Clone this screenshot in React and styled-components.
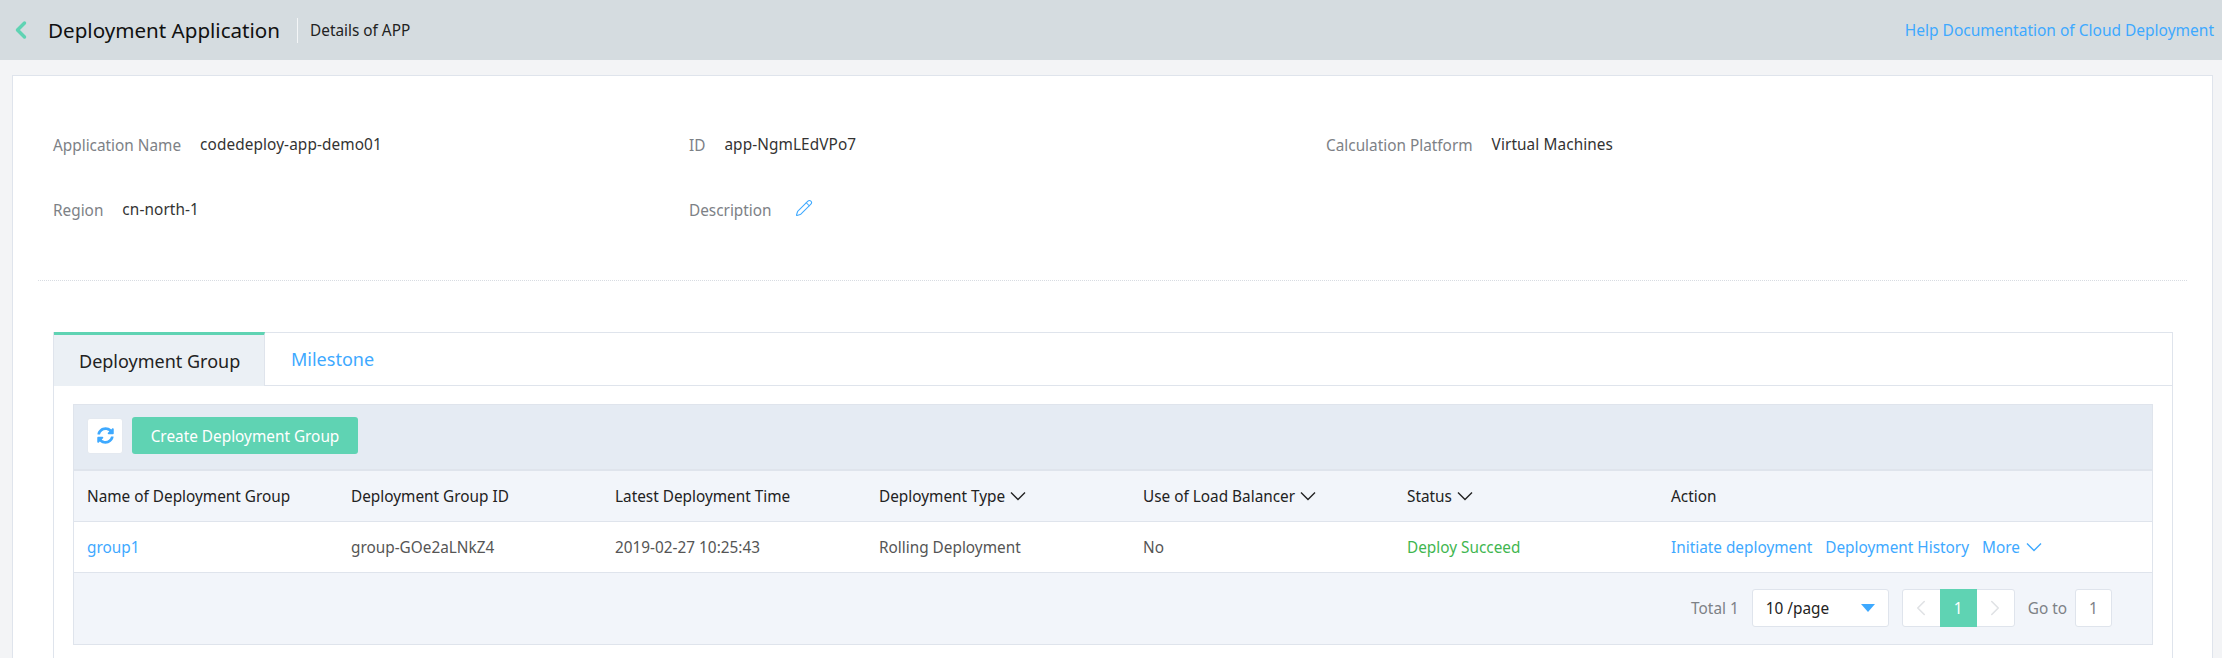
import React from "react";
import styled, { createGlobalStyle } from "styled-components";
import { FaSyncAlt } from "react-icons/fa";
import { ChevronLeft, ChevronRight, Pencil } from "lucide-react";

const Global = createGlobalStyle`
  html, body { margin: 0; padding: 0; background: #f3f4f6; }
  body { font-family: "Noto Sans", "Liberation Sans", sans-serif; font-size: 15.35px; color: #333; overflow: hidden; }
  * { box-sizing: border-box; }
`;
const link = "#3ea9ff";
const teal = "#5fd3b3";

const Page = styled.div`width: 2222px; height: 658px; overflow: hidden; display: flex; flex-direction: column;`;
const Header = styled.header`
  flex: none; height: 60px; background: #d5dce0; display: flex; align-items: center;
  padding: 0 8px 0 7px;
`;
const Back = styled.span`display: flex; width: 41px; color: ${teal};`;
const Title = styled.h1`margin: 0; font-weight: 400; font-size: 20.6px; color: #111;`;
const Crumb = styled.span`
  margin-left: 17px; padding-left: 12px; height: 25px; line-height: 24px; border-left: 1px solid #f4f6f7;
  font-size: 15.35px; color: #222;
`;
const HelpLink = styled.a`margin-left: auto; color: ${link}; font-size: 15.5px;`;
const Card = styled.main`
  flex: 1; margin: 15px 9px 0 12px; background: #fff; border: 1px solid #dfe4ec; border-bottom: 0;
  padding: 0 40px 0 25px;
`;
const Info = styled.section`
  display: grid; grid-template-columns: 636px 637px 1fr; grid-auto-rows: 65px;
  padding: 35px 0 0 15px; height: 205px; border-bottom: 1px dotted #d8dce2;
  margin-right: -15px;
`;
const Field = styled.div`display: flex; align-items: center; height: 65px;`;
const Label = styled.span`color: #7d8186; margin-right: 19px; position: relative; top: 1px;`;
const Value = styled.span`color: #333; letter-spacing: .1px;`;
const EditIcon = styled(Pencil)`color: ${link}; margin-left: 4px; position: relative; top: -1px;`;
const Tabs = styled.section`
  margin: 51px 0 0 15px; margin-right: -1px; height: 400px; border: 1px solid #dfe4ec; border-bottom: 0;
`;
const TabBar = styled.nav`display: flex; height: 53px; border-bottom: 1px solid #dfe4ec;`;
const Tab = styled.div`
  height: 52px; padding: 0 26px; display: flex; align-items: center; font-size: 18px; white-space: nowrap;
  ${p => p.$active
    ? `width:211px;padding:0 25px;background:#ebf0f5;color:#222;border-top:3px solid ${teal};border-right:1px solid #dfe4ec;margin-top:-1px;height:54px;`
    : `color:${link};`}
`;
const Panel = styled.div`margin: 18px 19px 0 19px; border: 1px solid #dfe4ec;`;
const Toolbar = styled.div`
  height: 66px; background: #e5ebf3; border-bottom: 2px solid #dfe4ec; display: flex; align-items: center;
  padding: 0 0 3px 13px; gap: 9px;
`;
const RefreshButton = styled.button`
  width: 36px; height: 36px; padding: 0; background: #fff; border: 1px solid #e4e9f0; border-radius: 3px;
  color: ${link}; display: flex; align-items: center; justify-content: center; font-size: 17px;
`;
const CreateButton = styled.button`
  width: 226px; height: 37px; padding: 0; background: ${teal}; border: 0; border-radius: 3px; color: #fff;
  font: inherit; font-size: 15.35px;
`;
const Row = styled.div`
  display: grid; grid-template-columns: repeat(6, 264px) 1fr; align-items: center;
  height: ${p => p.$h}px; padding-left: 13px; background: ${p => p.$bg}; border-bottom: 1px solid #dfe4ec;
  color: ${p => p.$color};
`;
const HeadCell = styled.span`display: flex; align-items: center; gap: 5px;`;
const Cell = styled.span`color: ${p => p.$color || "inherit"};`;
const Actions = styled.span`display: flex; align-items: center; gap: 13px; color: ${link};`;
const More = styled.span`display: flex; align-items: center; gap: 6px;`;
const Footer = styled.div`
  height: 71px; background: #f2f5fa; display: flex; align-items: center; justify-content: flex-end;
  padding: 0 40px 2px 0; color: #7d8186;
`;
const Select = styled.div`
  width: 137px; height: 38px; margin-left: 13px; background: #fff; border: 1px solid #dfe4ec; border-radius: 3px;
  display: flex; align-items: center; justify-content: space-between; padding: 0 13px; color: #222;
`;
const Caret = styled.i`
  width: 0; height: 0; border-left: 7.5px solid transparent; border-right: 7.5px solid transparent; border-top: 8px solid ${link};
`;
const Pager = styled.div`
  display: flex; height: 38px; margin: 0 13px; background: #fff; border: 1px solid #dfe4ec; border-radius: 3px;
`;
const PageCell = styled.span`
  width: 37px; margin: ${p => (p.$active ? "-1px 0" : "0")}; display: flex; align-items: center; justify-content: center;
  background: ${p => (p.$active ? teal : "transparent")}; color: ${p => (p.$active ? "#fff" : "#e0e2e5")};
`;
const GoInput = styled.span`
  width: 37px; height: 38px; margin-left: 8px; background: #fff; border: 1px solid #dfe4ec; border-radius: 3px;
  display: flex; align-items: center; justify-content: center; color: #7d8186;
`;

const Chevron = () => (
  <svg width="16" height="10" viewBox="0 0 16 10" fill="none" stroke="currentColor" strokeWidth="1.4">
    <path d="M1 1.5 L8 8.5 L15 1.5" />
  </svg>
);
const Sort = ({ children }) => <HeadCell>{children}<Chevron /></HeadCell>;

export default function App() {
  return (
    <Page>
      <Global />
      <Header>
        <Back><ChevronLeft size={28} strokeWidth={3} /></Back>
        <Title>Deployment Application</Title>
        <Crumb>Details of APP</Crumb>
        <HelpLink>Help Documentation of Cloud Deployment</HelpLink>
      </Header>
      <Card>
        <Info>
          <Field><Label>Application Name</Label><Value>codedeploy-app-demo01</Value></Field>
          <Field><Label>ID</Label><Value>app-NgmLEdVPo7</Value></Field>
          <Field><Label>Calculation Platform</Label><Value>Virtual Machines</Value></Field>
          <Field><Label>Region</Label><Value>cn-north-1</Value></Field>
          <Field><Label>Description</Label><EditIcon size={18} strokeWidth={1.4} /></Field>
        </Info>
        <Tabs>
          <TabBar>
            <Tab $active>Deployment Group</Tab>
            <Tab>Milestone</Tab>
          </TabBar>
          <Panel>
            <Toolbar>
              <RefreshButton><FaSyncAlt /></RefreshButton>
              <CreateButton>Create Deployment Group</CreateButton>
            </Toolbar>
            <Row $h={51} $bg="#f2f5fa" $color="#222">
              <HeadCell>Name of Deployment Group</HeadCell>
              <HeadCell>Deployment Group ID</HeadCell>
              <HeadCell>Latest Deployment Time</HeadCell>
              <Sort>Deployment Type</Sort>
              <Sort>Use of Load Balancer</Sort>
              <Sort>Status</Sort>
              <HeadCell>Action</HeadCell>
            </Row>
            <Row $h={51} $bg="#fff" $color="#555">
              <Cell $color={link}>group1</Cell>
              <Cell>group-GOe2aLNkZ4</Cell>
              <Cell>2019-02-27 10:25:43</Cell>
              <Cell>Rolling Deployment</Cell>
              <Cell>No</Cell>
              <Cell $color="#3fb650">Deploy Succeed</Cell>
              <Actions>
                <span>Initiate deployment</span>
                <span>Deployment History</span>
                <More>More<Chevron /></More>
              </Actions>
            </Row>
            <Footer>
              <span>Total 1</span>
              <Select><span>10 /page</span><Caret /></Select>
              <Pager>
                <PageCell><ChevronLeft size={26} strokeWidth={1.5} /></PageCell>
                <PageCell $active>1</PageCell>
                <PageCell><ChevronRight size={26} strokeWidth={1.5} /></PageCell>
              </Pager>
              <span>Go to</span>
              <GoInput>1</GoInput>
            </Footer>
          </Panel>
        </Tabs>
      </Card>
    </Page>
  );
}
